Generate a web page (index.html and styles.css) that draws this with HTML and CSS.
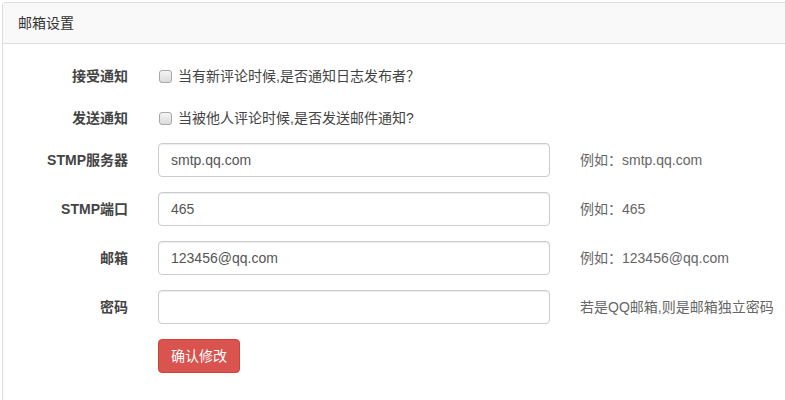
FILE: index.html
```html
<!DOCTYPE html>
<html lang="zh-CN">
<head>
    <meta charset="UTF-8">
    <meta name="viewport" content="width=device-width, initial-scale=1.0">
    <title>邮箱设置</title>
    <link rel="stylesheet" href="styles.css">
</head>
<body>
    <div class="panel">
        <div class="panel-heading">邮箱设置</div>
        <div class="panel-body">
            <form class="form-horizontal">
                <div class="form-group check-group">
                    <label class="control-label">接受通知</label>
                    <label class="checkbox">
                        <input type="checkbox">
                        <span>当有新评论时候,是否通知日志发布者？</span>
                    </label>
                </div>
                <div class="form-group check-group">
                    <label class="control-label">发送通知</label>
                    <label class="checkbox">
                        <input type="checkbox">
                        <span>当被他人评论时候,是否发送邮件通知?</span>
                    </label>
                </div>
                <div class="form-group">
                    <label class="control-label" for="smtp-host">STMP服务器</label>
                    <div class="field"><input class="form-control" type="text" id="smtp-host" value="smtp.qq.com"></div>
                    <span class="help-block">例如：smtp.qq.com</span>
                </div>
                <div class="form-group">
                    <label class="control-label" for="smtp-port">STMP端口</label>
                    <div class="field"><input class="form-control" type="text" id="smtp-port" value="465"></div>
                    <span class="help-block">例如：465</span>
                </div>
                <div class="form-group">
                    <label class="control-label" for="mail">邮箱</label>
                    <div class="field"><input class="form-control" type="text" id="mail" value="123456@qq.com"></div>
                    <span class="help-block">例如：123456@qq.com</span>
                </div>
                <div class="form-group">
                    <label class="control-label" for="mail-pass">密码</label>
                    <div class="field"><input class="form-control" type="password" id="mail-pass"></div>
                    <span class="help-block">若是QQ邮箱,则是邮箱独立密码</span>
                </div>
                <div class="form-group">
                    <span></span>
                    <div class="field"><button type="button" class="btn-danger">确认修改</button></div>
                </div>
            </form>
        </div>
    </div>
</body>
</html>
```

FILE: styles.css
```css
html, body {
    overflow: hidden;
}
body {
    font-family: "Liberation Sans", Arial, "Noto Sans CJK SC", sans-serif;
    font-size: 14px;
    line-height: 20px;
    color: #333;
    margin: 2px 0 0 2px;
    background-color: white;
}
.panel {
    box-sizing: border-box;
    height: calc(100vh - 2px);
    border: 1px solid #ddd;
    border-right: none;
    border-bottom: none;
    border-radius: 4px 0 0 0;
    background-color: white;
}
.panel-heading {
    background-color: #f9f9f9;
    border-bottom: 1px solid #ddd;
    border-radius: 3px 0 0 0;
    padding: 10px 15px;
    color: #333;
}
.panel-body {
    padding: 15px 0;
}
.form-group {
    display: grid;
    grid-template-columns: 140px 422px 1fr;
    align-items: center;
    margin-bottom: 15px;
    min-height: 34px;
}
.check-group {
    min-height: 27px;
    align-items: start;
}
.check-group .control-label {
    padding-top: 7px;
}
.control-label {
    text-align: right;
    padding-right: 15px;
    font-weight: bold;
    color: #444;
}
.checkbox {
    display: flex;
    align-items: center;
    padding: 7px 15px 0;
    color: #444;
}
.checkbox input {
    appearance: none;
    -webkit-appearance: none;
    box-sizing: border-box;
    width: 13px;
    height: 13px;
    margin: 0 6px 0 1px;
    border: 1px solid #a8a8a8;
    border-radius: 3px;
    background: linear-gradient(#f4f4f4, #dcdcdc);
}
.field {
    padding: 0 15px;
}
.form-control {
    display: block;
    box-sizing: border-box;
    width: 100%;
    height: 34px;
    padding: 6px 12px;
    font-family: inherit;
    font-size: 14px;
    color: #555;
    background-color: white;
    border: 1px solid #ccc;
    border-radius: 4px;
    box-shadow: inset 0 1px 1px rgba(0,0,0,0.075);
}
.help-block {
    padding-left: 15px;
    color: #666;
    white-space: nowrap;
}
.btn-danger {
    font-family: inherit;
    font-size: 14px;
    line-height: 20px;
    padding: 6px 12px;
    color: white;
    background-color: #d9534f;
    border: 1px solid #d43f3a;
    border-radius: 4px;
    cursor: pointer;
}
.btn-danger:hover {
    background-color: #c9302c;
}
```
